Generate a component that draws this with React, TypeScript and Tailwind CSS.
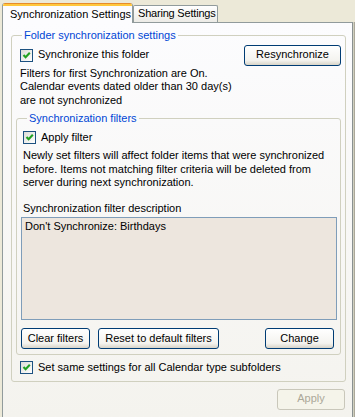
const font = "font-['Liberation_Sans','Arial',sans-serif]"

function CheckBox({ label }: { label: string }) {
  return (
    <label className="flex items-center gap-[5px]">
      <span className="flex h-[13px] w-[13px] shrink-0 items-center justify-center border border-[#1c5180] bg-[linear-gradient(135deg,#dcdcd7,#ffffff)]">
        <svg width="11" height="11" viewBox="0 0 11 11">
          <path d="M2.5 5 L4.6 7.2 L8.8 2.8" fill="none" stroke="#21a121" strokeWidth="2.1" />
        </svg>
      </span>
      <span>{label}</span>
    </label>
  )
}

function Button({ label, width, disabled }: { label: string; width: string; disabled?: boolean }) {
  return (
    <button
      className={
        disabled
          ? `${width} h-[21px] rounded-[3px] border border-[#c9c7ba] bg-[#f5f4ea] text-[#aca899]`
          : `${width} h-[21px] rounded-[3px] border border-[#003c74] bg-[linear-gradient(180deg,#ffffff_0%,#f4f3ef_75%,#d8d4c8_100%)] text-black`
      }
    >
      {label}
    </button>
  )
}

export default function App() {
  return (
    <div className={`h-[417px] w-[355px] overflow-hidden bg-[#ece9d8] pl-[2px] pt-[2px] text-[11px] leading-[13.5px] text-black ${font}`}>
      <div className="relative z-10 flex h-[20px] items-end">
        <div className="-mb-px flex h-[20px] w-[131px] flex-col overflow-hidden rounded-t-[3px] border-x border-[#919b9c] bg-[#fcfcfe]">
          <div className="h-px bg-[#e68b2c]" />
          <div className="h-[2px] bg-[#ffc73c]" />
          <div className="flex flex-1 items-center whitespace-nowrap pl-[7px]">Synchronization Settings</div>
        </div>
        <div className="flex h-[17px] w-[85px] items-center whitespace-nowrap rounded-t-[2px] border-x border-t border-[#919b9c] bg-[linear-gradient(180deg,#ffffff,#ecebe6)] pl-[4px] tracking-[-0.2px]">
          Sharing Settings
        </div>
      </div>

      <div className="h-[396px] w-[351px] border border-[#919b9c] border-r-[#8a9192] bg-[linear-gradient(180deg,#fcfcfe,#f4f3ee)] pl-[8px] pt-[6px] shadow-[1px_0_0_#d0d0bf,2px_0_0_#aca899]">
        <fieldset className="w-[335px] rounded-[3px] border border-[#d0d0bf] px-[4px] pb-[6px]">
          <legend className="ml-[6px] px-[2px] text-[#0046d5]">Folder synchronization settings</legend>

          <div className="mt-[2px] flex items-center justify-between pl-[4px]">
            <CheckBox label="Synchronize this folder" />
            <Button label="Resynchronize" width="w-[97px]" />
          </div>
          <div className="mt-[1px] pl-[4px]">
            <div>Filters for first Synchronization are On.</div>
            <div>Calendar events dated older than 30 day(s)</div>
            <div>are not synchronized</div>
          </div>

          <fieldset className="mt-[5px] rounded-[3px] border border-[#d0d0bf] pb-[5px] pl-[4px] pr-[3px]">
            <legend className="ml-[6px] px-[2px] text-[#0046d5]">Synchronization filters</legend>
            <div className="mt-[5px] pl-[2px]">
              <CheckBox label="Apply filter" />
            </div>
            <p className="mt-[5px] pl-[2px]">
              Newly set filters will affect folder items that were synchronized before. Items not matching filter
              criteria will be deleted from server during next synchronization.
            </p>
            <div className="mt-[12px] pl-[2px]">Synchronization filter description</div>
            <div className="mt-[2px] h-[103px] border border-[#7f9db9] bg-[#ede6de] pl-[3px] pt-[2px]">
              Don't Synchronize: Birthdays
            </div>
            <div className="mt-[8px] flex items-center pr-[3px]">
              <Button label="Clear filters" width="w-[69px]" />
              <div className="ml-[8px]">
                <Button label="Reset to default filters" width="w-[121px]" />
              </div>
              <div className="ml-auto">
                <Button label="Change" width="w-[69px]" />
              </div>
            </div>
          </fieldset>

          <div className="mt-[6px] pl-[4px]">
            <CheckBox label="Set same settings for all Calendar type subfolders" />
          </div>
        </fieldset>

        <div className="mt-[7px] flex w-[335px] justify-end pr-[1px]">
          <Button label="Apply" width="w-[68px]" disabled />
        </div>
      </div>
    </div>
  )
}
